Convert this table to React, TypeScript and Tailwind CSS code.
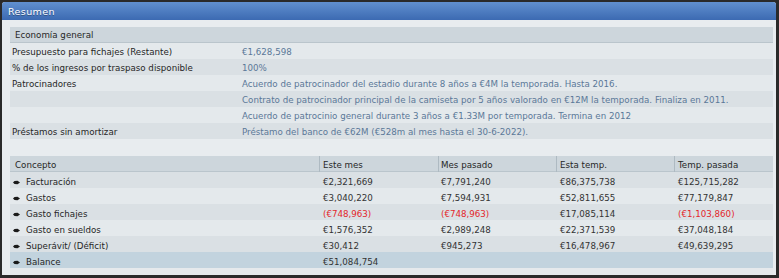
import React from "react";

const font = { fontFamily: '"DejaVu Sans", Verdana, sans-serif' };

const Bullet = () => (
  <svg width="7" height="5" viewBox="0 0 7 5" className="shrink-0">
    <path d="M0 2.5 L1.5 1 L4.5 0.8 L7 2.5 L4.5 4.2 L1.5 4 Z" fill="#1a1a1a" />
  </svg>
);

const infoRows: { label: string; value: string; dark: boolean }[] = [
  { label: "Presupuesto para fichajes (Restante)", value: "€1,628,598", dark: false },
  { label: "% de los ingresos por traspaso disponible", value: "100%", dark: true },
  { label: "Patrocinadores", value: "Acuerdo de patrocinador del estadio durante 8 años a €4M la temporada. Hasta 2016.", dark: false },
  { label: "", value: "Contrato de patrocinador principal de la camiseta por 5 años valorado en €12M la temporada. Finaliza en 2011.", dark: true },
  { label: "", value: "Acuerdo de patrocinio general durante 3 años a €1.33M por temporada. Termina en 2012", dark: false },
  { label: "Préstamos sin amortizar", value: "Préstamo del banco de €62M (€528m al mes hasta el 30-6-2022).", dark: true },
];

type Cell = { v: string; red?: boolean };
const tableRows: { name: string; cells: Cell[] }[] = [
  { name: "Facturación", cells: [{ v: "€2,321,669" }, { v: "€7,791,240" }, { v: "€86,375,738" }, { v: "€125,715,282" }] },
  { name: "Gastos", cells: [{ v: "€3,040,220" }, { v: "€7,594,931" }, { v: "€52,811,655" }, { v: "€77,179,847" }] },
  { name: "Gasto fichajes", cells: [{ v: "(€748,963)", red: true }, { v: "(€748,963)", red: true }, { v: "€17,085,114" }, { v: "(€1,103,860)", red: true }] },
  { name: "Gasto en sueldos", cells: [{ v: "€1,576,352" }, { v: "€2,989,248" }, { v: "€22,371,539" }, { v: "€37,048,184" }] },
  { name: "Superávit/ (Déficit)", cells: [{ v: "€30,412" }, { v: "€945,273" }, { v: "€16,478,967" }, { v: "€49,639,295" }] },
];

const cols = "grid grid-cols-[309px_119px_118px_118px_1fr]";

export default function App() {
  return (
    <div className="w-[779px] h-[278px] bg-[#2a2a2a] pt-[2px] pl-[2px] pr-[3px] pb-[3px] overflow-hidden" style={font}>
      <div className="h-full bg-[#e8ecef] rounded-t-[3px] flex flex-col overflow-hidden">
        <div className="h-[18px] shrink-0 bg-gradient-to-b from-[#6190cf] to-[#3c6ab2] text-white text-[9.5px] tracking-[0.4px] pl-[6px] pt-[2px] flex items-center [text-shadow:0_1px_0_rgba(0,0,0,0.35)]">
          Resumen
        </div>
        <div className="pt-[7px] pl-[8px] pr-[3px] text-[8.7px] text-[#262626]">
          <div className="h-[16px] bg-[#cdd6dc] border-b border-[#bac5cc] flex items-center pl-[5px] pt-[3px]">Economía general</div>
          {infoRows.map((r, i) => (
            <div key={i} className={`h-[16px] flex items-center pt-[4px] ${r.dark ? "bg-[#dae0e4]" : "bg-[#e4e9ec]"}`}>
              <div className="w-[232px] pl-[2px] shrink-0">{r.label}</div>
              <div className="text-[#5a7898] whitespace-nowrap">{r.value}</div>
            </div>
          ))}
          <div className="h-[17px]" />
          <div className={`${cols} h-[16px] bg-[#cdd6dc] border-b border-[#bac5cc] items-stretch`}>
            <div className="flex items-center pl-[5px] pt-[3px]">Concepto</div>
            <div className="flex items-center pl-[3px] pt-[3px] border-l border-[#aebac2]">Este mes</div>
            <div className="flex items-center pl-[2px] pt-[3px] border-l border-[#aebac2]">Mes pasado</div>
            <div className="flex items-center pl-[3px] pt-[3px] border-l border-[#aebac2]">Esta temp.</div>
            <div className="flex items-center pl-[3px] pt-[3px] border-l border-[#aebac2]">Temp. pasada</div>
          </div>
          {tableRows.map((r, i) => (
            <div key={r.name} className={`${cols} h-[16px] items-center pt-[4px] ${i % 2 === 0 ? "bg-[#dae0e4]" : "bg-[#e4e9ec]"}`}>
              <div className="flex items-center gap-[6px] pl-[3px]">
                <Bullet />
                <span>{r.name}</span>
              </div>
              {r.cells.map((c, j) => (
                <div key={j} className={`${j === 1 ? "pl-[3px]" : "pl-[4px]"} ${c.red ? "text-[#e3262b]" : "text-[#333333]"}`}>
                  {c.v}
                </div>
              ))}
            </div>
          ))}
          <div className={`${cols} h-[16px] items-center pt-[4px] bg-[#c2d3de]`}>
            <div className="flex items-center gap-[6px] pl-[3px]">
              <Bullet />
              <span>Balance</span>
            </div>
            <div className="pl-[4px] text-[#333333]">€51,084,754</div>
          </div>
          <div className="h-[7px] bg-[#e5e9ec]" />
        </div>
      </div>
    </div>
  );
}
